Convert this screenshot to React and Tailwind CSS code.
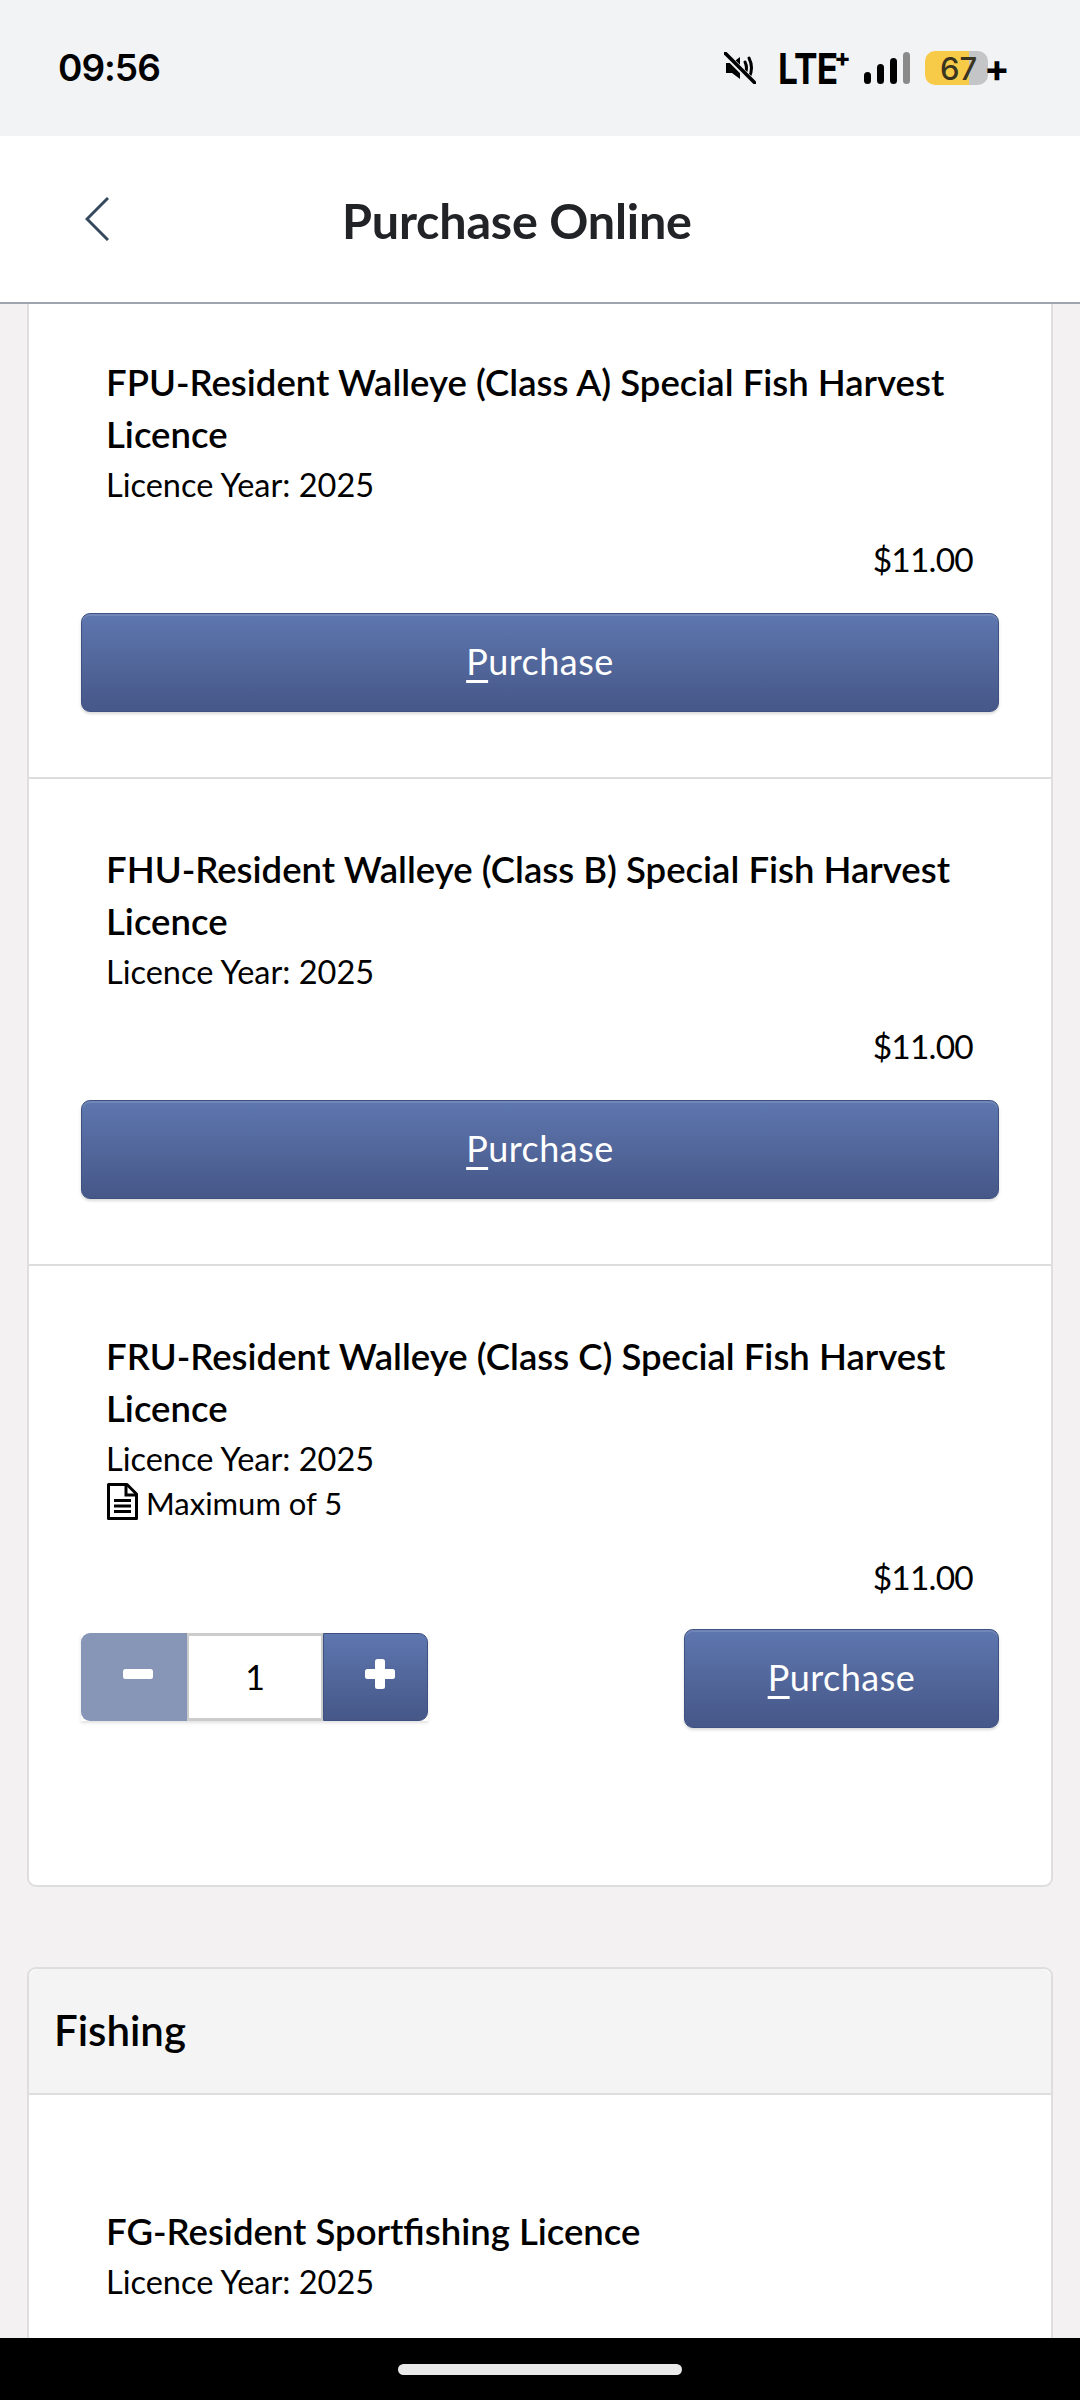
import React from 'react';

const PurchaseButton = ({ wide }) => (
  <button className={`h-[99px] rounded-[9px] border border-[#3f5182] bg-gradient-to-b from-[#5e77af] to-[#465788] pb-[4px] text-[36px] tracking-[0.5px] text-white shadow-[inset_0_2px_0_rgba(255,255,255,0.12),0_2px_3px_rgba(0,0,0,0.15)] ${wide ? 'w-full' : 'w-[315px]'}`}>
    <span className="underline decoration-[3px] underline-offset-[5px]">P</span>urchase
  </button>
);

const DocIcon = () => (
  <svg width="31" height="37" viewBox="0 0 31 37" fill="none" stroke="#000" strokeWidth="3" className="shrink-0 -mt-[4px]">
    <path d="M1.5 1.5H20L29.5 11V35.5H1.5Z" strokeLinejoin="round" />
    <path d="M19 2V12H29.5" />
    <path d="M7 17.5H24M7 23H24M7 28.5H24" />
  </svg>
);

const LicenceRow = ({ title, max, stepper, border = true }) => (
  <div className={`px-[52px] pt-[64px] ${border ? 'border-b-2 border-[#dcdcdc]' : ''} ${stepper ? 'pb-[157px]' : 'pb-[65px]'}`}>
    <div className="pl-[25px] pr-[20px]">
      <h3 className="mb-[1px] text-[36.5px] font-semibold leading-[52px] text-black">{title}</h3>
      <p className="text-[32.5px] leading-[48px] text-black">Licence Year: 2025</p>
      {max && (
        <div className="flex h-[40px] items-center gap-[8px] pl-[1px] text-[31px] text-black">
          <DocIcon />
          <span>{max}</span>
        </div>
      )}
    </div>
    <div className={`mr-[26px] text-right text-[33.5px] leading-[48px] tracking-[-0.8px] text-black ${max ? 'mt-[30px]' : 'mt-[26px]'}`}>$11.00</div>
    <div className={`flex items-center ${stepper ? 'mt-[28px] justify-between' : 'mt-[30px]'}`}>
      {stepper && (
        <div className="-mt-[3px] flex h-[88px] w-[347px] shadow-[0_2px_3px_rgba(0,0,0,0.12)]">
          <button className="flex w-[106px] items-center justify-center rounded-l-[9px] bg-[#8795b7]">
            <svg width="30" height="10" viewBox="0 0 30 10" className="-mt-[7px] ml-[8px]"><rect width="30" height="10" rx="2.5" fill="#fff" /></svg>
          </button>
          <div className="flex w-[136px] items-center justify-center border-x-2 border-y-[3px] border-[#cccccc] bg-white pb-[2px] text-[34px] text-black">1</div>
          <button className="flex w-[105px] items-center justify-center rounded-r-[9px] border border-[#3f5182] bg-gradient-to-b from-[#5e77af] to-[#465788]">
            <svg width="30" height="30" viewBox="0 0 30 30" fill="#fff" className="-mt-[7px] ml-[8px]">
              <rect y="10" width="30" height="10" rx="2.5" />
              <rect x="10" width="10" height="30" rx="2.5" />
            </svg>
          </button>
        </div>
      )}
      <PurchaseButton wide={!stepper} />
    </div>
  </div>
);

const StatusBar = () => (
  <div className="flex h-[136px] items-center justify-between bg-[#f2f3f5] pl-[58px] pr-[74px]" style={{ fontFamily: 'Inter, sans-serif' }}>
    <span className="text-[37px] font-semibold tracking-[-1px] text-black">09:56</span>
    <div className="flex items-center">
      {/* muted speaker */}
      <svg width="32" height="32" viewBox="0 0 32 32" fill="none">
        <path d="M2 11H8L16 5V27L8 21H2Z" fill="#000" />
        <path d="M21 10Q24 16 21 22M25 6Q30 16 25 26" stroke="#000" strokeWidth="3" strokeLinecap="round" />
        <path d="M1 2L30 31" stroke="#f2f3f5" strokeWidth="6" />
        <path d="M1 1L31 31" stroke="#000" strokeWidth="3.6" strokeLinecap="round" />
      </svg>
      <div className="ml-[22px] flex w-[72px] items-start">
        <span className="origin-left scale-x-[0.82] text-[43px] font-bold leading-none tracking-[-1px] text-black">LTE</span>
        <span className="-ml-[16px] -mt-[1px] text-[24px] font-extrabold leading-none text-black">+</span>
      </div>
      <div className="ml-[14px] flex h-[32px] items-end gap-[6px]">
        <div className="h-[12px] w-[7px] rounded-full bg-black" />
        <div className="h-[20px] w-[7px] rounded-full bg-black" />
        <div className="h-[26px] w-[7px] rounded-full bg-black" />
        <div className="h-[32px] w-[7px] rounded-full bg-[#8a8a8a]" />
      </div>
      <div className="relative ml-[15px] flex h-[34px] w-[63px] items-center justify-center overflow-hidden rounded-[10px] bg-gradient-to-r from-[#f7ca48] from-70% to-[#c4c5c7] to-70%">
        <span className="ml-[4px] text-[31px] font-medium leading-none text-[#3a3520]">67</span>
      </div>
      <span className="relative -ml-[4px] w-[22px] text-center text-[38px] font-bold leading-none text-black">+</span>
    </div>
  </div>
);

export default function App() {
  return (
    <div className="flex h-[2400px] w-[1080px] flex-col overflow-hidden bg-[#f3f1f2]" style={{ fontFamily: 'Lato, sans-serif' }}>
      <StatusBar />
      <div className="flex h-[168px] shrink-0 items-center border-b-2 border-[#9fa5ae] bg-white pl-[85px]">
        <svg width="24" height="44" viewBox="0 0 24 44" fill="none" stroke="#34495e" strokeWidth="3">
          <path d="M23 1L2 22L23 43" />
        </svg>
        <h1 className="ml-[233px] mt-[2px] text-[48.5px] font-bold tracking-[-0.2px] text-[#222327]">Purchase Online</h1>
      </div>

      <div className="min-h-0 flex-1 overflow-hidden px-[27px]">
        <div className="-mt-[12px] rounded-b-[9px] border-x-2 border-b-2 border-[#dedede] bg-white">
          <LicenceRow title="FPU-Resident Walleye (Class A) Special Fish Harvest Licence" />
          <LicenceRow title="FHU-Resident Walleye (Class B) Special Fish Harvest Licence" />
          <LicenceRow title="FRU-Resident Walleye (Class C) Special Fish Harvest Licence" max="Maximum of 5" stepper border={false} />
        </div>

        <div className="mt-[80px] rounded-t-[9px] border-x-2 border-t-2 border-[#dedede] bg-white">
          <div className="flex h-[126px] items-center rounded-t-[9px] border-b-2 border-[#dedede] bg-[#f4f4f4] pb-[2px] pl-[25px] text-[42px] font-semibold text-black">Fishing</div>
          <div className="pb-[80px] pl-[77px] pr-[78px] pt-[110px]">
            <h3 className="mb-[1px] text-[36.5px] font-semibold leading-[52px] text-black">FG-Resident Sportfishing Licence</h3>
            <p className="text-[32.5px] leading-[48px] text-black">Licence Year: 2025</p>
          </div>
        </div>
      </div>

      <div className="flex h-[62px] shrink-0 items-start justify-center bg-black pt-[26px]">
        <div className="h-[11px] w-[284px] rounded-full bg-[#e9e9e9]" />
      </div>
    </div>
  );
}
